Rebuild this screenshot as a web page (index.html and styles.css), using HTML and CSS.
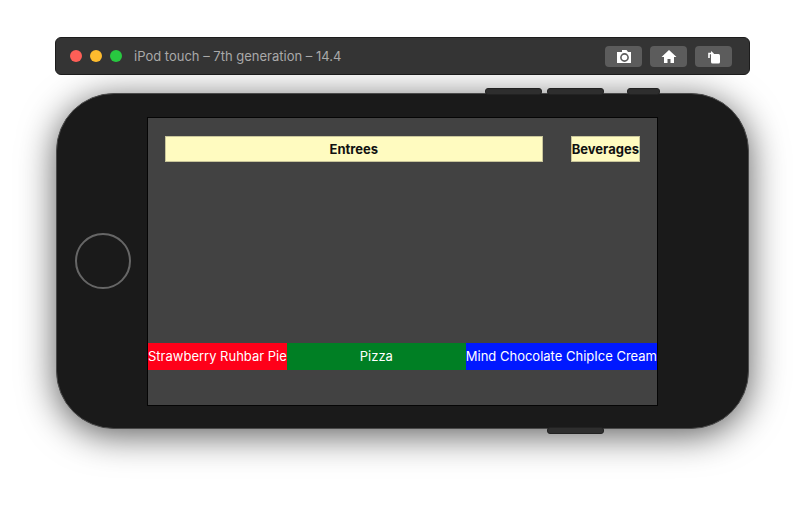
FILE: index.html
```html
<!DOCTYPE html>
<html lang="en">
<head>
    <meta charset="UTF-8">
    <meta name="viewport" content="width=device-width, initial-scale=1.0">
    <title>iPod touch – 7th generation – 14.4</title>
    <link rel="stylesheet" href="styles.css">
</head>
<body>
    <div class="simulator">
        <div class="titlebar">
            <div class="lights">
                <span class="light red"></span>
                <span class="light yellow"></span>
                <span class="light green"></span>
            </div>
            <span class="title">iPod touch – 7th generation – 14.4</span>
            <div class="tools">
                <button class="tool" title="Screenshot">
                    <svg width="18" height="15" viewBox="0 0 18 15">
                        <path d="M2 3h3l1.5-2h5L13 3h3v11H2z" fill="#fff"/>
                        <circle cx="9.5" cy="8.5" r="3.6" fill="none" stroke="#5c5c5c" stroke-width="1.6"/>
                        <rect x="1" y="0" width="6" height="3" fill="#5c5c5c"/>
                    </svg>
                </button>
                <button class="tool" title="Home">
                    <svg width="18" height="15" viewBox="0 0 18 15">
                        <path d="M9 1L1.5 8h2.5v6h3.5v-4h3v4H14V8h2.5z" fill="#fff"/>
                    </svg>
                </button>
                <button class="tool" title="Rotate">
                    <svg width="18" height="15" viewBox="0 0 18 15">
                        <rect x="6" y="5" width="9" height="9.5" rx="1.5" fill="#fff"/>
                        <path d="M4 9V4.5h3" fill="none" stroke="#fff" stroke-width="1.6"/>
                        <path d="M6 2l3 2.5L6 7z" fill="#fff"/>
                    </svg>
                </button>
            </div>
        </div>

        <div class="phone">
            <span class="side-btn volume-up"></span>
            <span class="side-btn volume-down"></span>
            <span class="side-btn power"></span>
            <span class="side-btn bottom-btn"></span>

            <div class="home-button"></div>

            <div class="screen">
                <div class="menu-row">
                    <div class="category wide">Entrees</div>
                    <div class="category">Beverages</div>
                </div>
                <div class="dish-row">
                    <div class="dish red">Strawberry Ruhbar Pie</div>
                    <div class="dish green grow">Pizza</div>
                    <div class="dish blue">Mind Chocolate ChipIce Cream</div>
                </div>
            </div>
        </div>
    </div>
</body>
</html>
```

FILE: styles.css
```css
body{
    margin: 0;
    background-color: #fff;
    font-family: 'Inter', 'Liberation Sans', sans-serif;
}
.simulator{
    width: 805px;
    height: 512px;
    padding: 37px 0 0 55px;
    box-sizing: border-box;
}
.titlebar{
    width: 695px;
    height: 38px;
    box-sizing: border-box;
    background-color: #343434;
    border: 1px solid #1c1c1c;
    border-radius: 6px;
    display: flex;
    align-items: center;
    padding-left: 14px;
    padding-right: 17px;
    position: relative;
    z-index: 2;
}
.lights{
    display: flex;
    gap: 8px;
}
.light{
    width: 12px;
    height: 12px;
    border-radius: 50%;
}
.red{ background-color: #fe0019; }
.light.red{ background-color: #fe5f57; }
.light.yellow{ background-color: #febc2e; }
.light.green{ background-color: #28c840; }
.title{
    margin-left: 12px;
    color: #a9a9a9;
    font-size: 13px;
}
.tools{
    margin-left: auto;
    display: flex;
    gap: 8px;
}
.tool{
    width: 37px;
    height: 21px;
    border: none;
    border-radius: 4px;
    background-color: #5c5c5c;
    display: flex;
    align-items: center;
    justify-content: center;
    padding: 0;
}
.phone{
    position: relative;
    margin-top: 18px;
    margin-left: 1px;
    width: 693px;
    height: 336px;
    box-sizing: border-box;
    background-color: #1a1a1a;
    border: 1px solid #4a4a4a;
    border-radius: 58px;
    box-shadow: 0 6px 36px rgba(0, 0, 0, 0.65);
    display: flex;
    align-items: center;
    padding-left: 18px;
}
.side-btn{
    position: absolute;
    top: -6px;
    height: 7px;
    background-color: #2e2e2e;
    border: 1px solid #222;
    border-radius: 3px;
    box-sizing: border-box;
}
.volume-up{ left: 428px; width: 57px; }
.volume-down{ left: 490px; width: 57px; }
.power{ left: 570px; width: 33px; }
.bottom-btn{ top: auto; bottom: -6px; left: 490px; width: 57px; }
.home-button{
    width: 56px;
    height: 56px;
    box-sizing: border-box;
    border: 2px solid #666;
    border-radius: 50%;
}
.screen{
    margin-left: 16px;
    width: 511px;
    height: 289px;
    box-sizing: border-box;
    background-color: #424242;
    border: 1px solid #050505;
    display: flex;
    flex-direction: column;
}
.menu-row{
    display: flex;
    gap: 28px;
    padding: 18px 17px 0 17px;
}
.category{
    height: 26px;
    background-color: #fffbc0;
    border: 1px solid #c8c59a;
    box-sizing: border-box;
    display: flex;
    align-items: center;
    justify-content: center;
    font-size: 13px;
    font-weight: 700;
    color: #111;
}
.wide{ flex: 1; }
.dish-row{
    display: flex;
    margin-top: auto;
    margin-bottom: 35px;
}
.dish{
    height: 27px;
    display: flex;
    align-items: center;
    justify-content: center;
    color: #fff;
    font-size: 13px;
    white-space: nowrap;
}
.green{ background-color: #007f24; }
.blue{ background-color: #0019ff; }
.grow{ flex: 1; }
```
